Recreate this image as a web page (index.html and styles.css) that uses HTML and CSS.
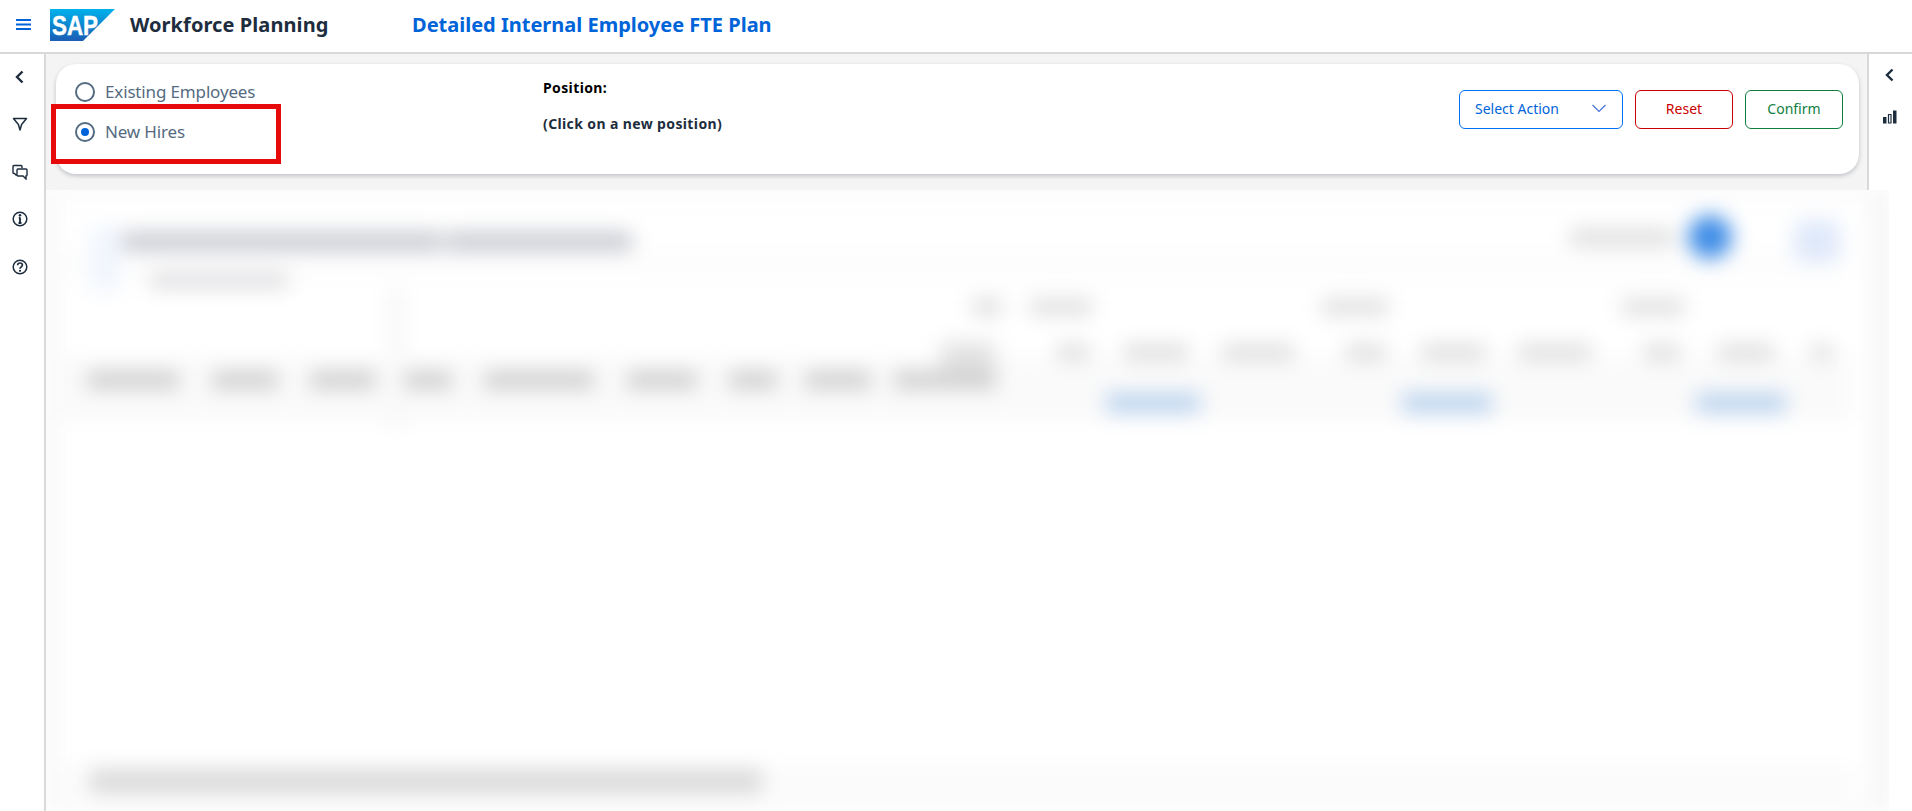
FILE: index.html
```html
<!DOCTYPE html>
<html lang="en">
  <head>
    <meta charset="UTF-8" />
    <meta name="viewport" content="width=device-width, initial-scale=1.0" />
    <title>Detailed Internal Employee FTE Plan</title>
    <link rel="stylesheet" href="styles.css">
  </head>
  <body>
    <header class="topbar">
      <button class="menu-btn" aria-label="Menu">
        <svg width="15" height="11" viewBox="0 0 15 11"><path d="M0 1h15M0 5.500h15M0 10h15" stroke="#0064d9" stroke-width="2"/></svg>
      </button>
      <svg class="logo" width="65" height="32" viewBox="0 0 65 32">
        <defs>
          <linearGradient id="sapBlue" x1="0" y1="0" x2="0" y2="1">
            <stop offset="0" stop-color="#00b1eb"/>
            <stop offset="1" stop-color="#1b5cb5"/>
          </linearGradient>
        </defs>
        <polygon points="0,0 65,0 33,32 0,32" fill="url(#sapBlue)"/>
        <text x="2" y="26" class="logo-text" textLength="46" lengthAdjust="spacingAndGlyphs">SAP</text>
      </svg>
      <span class="app-name">Workforce Planning</span>
      <span class="page-title">Detailed Internal Employee FTE Plan</span>
    </header>

    <div class="layout">
      <nav class="sidenav">
        <svg width="16" height="16" viewBox="0 0 16 16"><path d="M10.500 2.500 5 8l5.500 5.500" fill="none" stroke="#1d2d3e" stroke-width="2.400"/></svg>
        <svg width="16" height="16" viewBox="0 0 16 16"><path d="M1.500 2.500h13L9.600 8.500 8 14 6.400 8.500z" fill="none" stroke="#1d2d3e" stroke-width="1.500" stroke-linejoin="round"/></svg>
        <svg width="16" height="16" viewBox="0 0 16 16"><path d="M2 1.500h7q1 0 1 1v1.500M6 11H4L2.500 9.500H2q-1 0-1-1v-6q0-1 1-1" fill="none" stroke="#1d2d3e" stroke-width="1.400"/><path d="M6 5h8q1 0 1 1v5q0 1-1 1v3l-3-3H6q-1 0-1-1V6q0-1 1-1z" fill="#fff" stroke="#1d2d3e" stroke-width="1.400"/></svg>
        <svg width="16" height="16" viewBox="0 0 16 16"><circle cx="8" cy="8" r="6.800" fill="none" stroke="#1d2d3e" stroke-width="1.500"/><path d="M8 6.500V12M6.500 12h3M6.800 6.700H8" fill="none" stroke="#1d2d3e" stroke-width="1.900"/><circle cx="8" cy="4.200" r="1.300" fill="#1d2d3e"/></svg>
        <svg width="16" height="16" viewBox="0 0 16 16"><circle cx="8" cy="8" r="6.800" fill="none" stroke="#1d2d3e" stroke-width="1.500"/><path d="M5.600 6.200C5.700 4.800 6.700 4 8 4s2.400.8 2.400 2.100c0 1.800-2.400 1.800-2.400 3.700" fill="none" stroke="#1d2d3e" stroke-width="1.700"/><circle cx="8" cy="11.800" r="1.100" fill="#1d2d3e"/></svg>
      </nav>

      <main class="content">
        <section class="selection-card">
          <div class="radio-group">
            <label class="radio-row"><span class="radio"></span>Existing Employees</label>
            <label class="radio-row"><span class="radio radio-on"></span>New Hires</label>
          </div>
          <div class="position-info">
            <p class="position-label">Position:</p>
            <p class="position-hint">(Click on a new position)</p>
          </div>
          <div class="actions">
            <button class="btn btn-select">
              <span>Select Action</span>
              <svg width="16" height="9" viewBox="0 0 16 9"><path d="M1.500 1 8 7.500 14.500 1" fill="none" stroke="#3f6fd8" stroke-width="1.100"/></svg>
            </button>
            <button class="btn btn-reset">Reset</button>
            <button class="btn btn-confirm">Confirm</button>
          </div>
          <div class="highlight-box"></div>
        </section>

        <section class="blurred-panel">
          <!-- table behind the dialog, only visible as soft shapes -->
          <svg class="blurred-shapes" width="1844" height="621" viewBox="46 190 1844 621">
            <rect x="46" y="190" width="1844" height="621" fill="#f6f6f6"/>
            <rect x="56" y="196" width="1814" height="610" fill="#fff"/>
            <rect x="60" y="250" width="1790" height="30" fill="#fdfdfd"/>
            <rect x="60" y="358" width="1790" height="62" fill="#fafafa"/>
            <rect x="60" y="765" width="1790" height="46" fill="#fbfbfb"/>

            <rect x="90" y="226" width="30" height="66" fill="#f1f6fd"/>
            <g fill="#c8cad1">
              <rect x="122" y="232" width="320" height="19"/>
              <rect x="446" y="232" width="186" height="19"/>
            </g>
            <rect x="150" y="273" width="138" height="15" fill="#dddde0"/>
            <rect x="388" y="290" width="16" height="66" fill="#f6f6f6"/>
            <rect x="388" y="410" width="16" height="16" fill="#f6f6f6"/>

            <g fill="#dedede">
              <rect x="1570" y="229" width="104" height="17"/>
              <rect x="972" y="299" width="30" height="16"/>
              <rect x="1030" y="299" width="62" height="16"/>
              <rect x="1322" y="299" width="66" height="16"/>
              <rect x="1622" y="299" width="62" height="16"/>
              <rect x="1057" y="344" width="32" height="16"/>
              <rect x="1124" y="344" width="64" height="16"/>
              <rect x="1222" y="344" width="72" height="16"/>
              <rect x="1346" y="344" width="40" height="16"/>
              <rect x="1421" y="344" width="64" height="16"/>
              <rect x="1519" y="344" width="72" height="16"/>
              <rect x="1644" y="344" width="36" height="16"/>
              <rect x="1718" y="344" width="56" height="16"/>
              <rect x="1812" y="344" width="20" height="16"/>
            </g>
            <rect x="941" y="342" width="54" height="32" fill="#e2e2e2"/>
            <g fill="#cfcfcf">
              <rect x="87" y="371" width="92" height="18"/>
              <rect x="212" y="371" width="66" height="18"/>
              <rect x="310" y="371" width="66" height="18"/>
              <rect x="404" y="371" width="48" height="18"/>
              <rect x="484" y="371" width="110" height="18"/>
              <rect x="627" y="371" width="70" height="18"/>
              <rect x="729" y="371" width="48" height="18"/>
              <rect x="805" y="371" width="66" height="18"/>
              <rect x="894" y="371" width="102" height="18"/>
            </g>
            <g fill="#bdd4ef">
              <rect x="1106" y="393" width="94" height="20"/>
              <rect x="1402" y="393" width="90" height="20"/>
              <rect x="1696" y="393" width="90" height="20"/>
            </g>
            <circle cx="1710" cy="237" r="22" fill="#3f8de6"/>
            <rect x="1794" y="220" width="46" height="42" rx="8" fill="#dfe9fa"/>
            <rect x="90" y="769" width="672" height="24" fill="#dadada"/>
          </svg>
        </section>
      </main>

      <aside class="sidenav sidenav-right">
        <svg width="16" height="16" viewBox="0 0 16 16"><path d="M10.500 2.500 5 8l5.500 5.500" fill="none" stroke="#1d2d3e" stroke-width="2.400"/></svg>
        <svg width="14" height="14" viewBox="0 0 14 14"><path d="M0 7h3.500v6.500H0z" fill="#1d2d3e"/><path d="M5.500 4.500h2.500v8.500H5.500z" fill="#fff" stroke="#1d2d3e" stroke-width="1.200"/><path d="M10 .5h3.500v13H10z" fill="#1d2d3e"/></svg>
      </aside>
    </div>
  </body>
</html>
```

FILE: styles.css
```css
* {
  box-sizing: border-box;
}
html,
body {
  height: 100%;
}
body {
  margin: 0;
  font-family: "Noto Sans", Arial, sans-serif;
  background: #fff;
  color: #1d2d3e;
  overflow: hidden;
}
p {
  margin: 0;
}
button {
  font-family: inherit;
  cursor: pointer;
}

/* top bar */
.topbar {
  display: flex;
  align-items: center;
  height: 54px;
  padding: 0 0 4px 16px;
  background: #fff;
  border-bottom: 2px solid #d9d9d9;
}
.menu-btn {
  display: flex;
  padding: 0;
  border: none;
  background: none;
}
.logo {
  margin: 2px 0 0 19px;
}
.logo-text {
  font-family: "Liberation Sans", Arial, sans-serif;
  font-size: 28px;
  font-weight: 700;
  fill: #fff;
  stroke: #fff;
  stroke-width: 0.5px;
}
.app-name {
  width: 282px;
  margin-left: 15px;
  font-size: 20px;
  font-weight: 700;
  letter-spacing: 0.08px;
}
.page-title {
  font-size: 20px;
  font-weight: 700;
  color: #0064d9;
}

/* page body */
.layout {
  display: flex;
  height: calc(100% - 54px);
}
.sidenav {
  display: flex;
  flex-direction: column;
  align-items: center;
  gap: 31.400px;
  flex: 0 0 46px;
  padding: 15px 8px 0 3px;
  background: #fff;
  border-right: 2px solid #d9d9d9;
}
.sidenav-right {
  flex: 0 0 45px;
  gap: 27px;
  padding: 13px 2px 0 0;
  border-right: none;
  border-left: 2px solid #d9d9d9;
}
.content {
  flex: 1;
  min-width: 0;
  background: #f4f4f4;
  padding-top: 10px;
}

/* selection card */
.selection-card {
  position: relative;
  display: flex;
  height: 110px;
  margin: 0 8px 0 10px;
  padding: 18px 16px 0 19px;
  background: #fff;
  border-radius: 20px;
  box-shadow: 0 2px 4px rgba(60, 70, 85, 0.28);
}
.radio-group {
  display: flex;
  flex-direction: column;
  gap: 20px;
  width: 468px;
}
.radio-row {
  display: flex;
  align-items: center;
  gap: 10px;
  height: 20px;
  padding-bottom: 1px;
  font-size: 17px;
  letter-spacing: -0.15px;
  color: #556b82;
}
.radio {
  display: flex;
  align-items: center;
  justify-content: center;
  width: 20px;
  height: 20px;
  margin-bottom: -1px;
  border: 2px solid #556b82;
  border-radius: 50%;
}
.radio-on::after {
  content: "";
  width: 8px;
  height: 8px;
  background: #0064d9;
  border-radius: 50%;
}
.position-info {
  font-size: 14px;
  font-weight: 700;
  letter-spacing: 0.38px;
}
.position-label {
  color: #000;
  margin-top: -4px;
}
.position-hint {
  margin-top: 17px;
}
.actions {
  display: flex;
  gap: 12px;
  margin-left: auto;
  margin-top: 8px;
}
.btn {
  height: 39px;
  width: 98px;
  padding: 0 0 2px;
  border-radius: 6px;
  background: #fff;
  font-size: 14px;
}
.btn-select {
  display: flex;
  align-items: center;
  justify-content: space-between;
  width: 164px;
  padding: 0 15px 2px 15px;
  color: #0064d9;
  border: 1px solid #0070f2;
}
.btn-reset {
  color: #cc0000;
  border: 1px solid #cc0000;
}
.btn-confirm {
  color: #107e3e;
  border: 1px solid #107e3e;
}
.highlight-box {
  position: absolute;
  left: -5px;
  top: 40px;
  width: 230px;
  height: 60px;
  border: 5px solid #e60a0a;
}

/* blurred table area */
.blurred-panel {
  position: relative;
  z-index: 1;
  height: 621px;
  margin: 16px -22px 0 0;
  overflow: hidden;
  background: #fff;
}
.blurred-shapes {
  display: block;
  filter: blur(10px);
}
```
